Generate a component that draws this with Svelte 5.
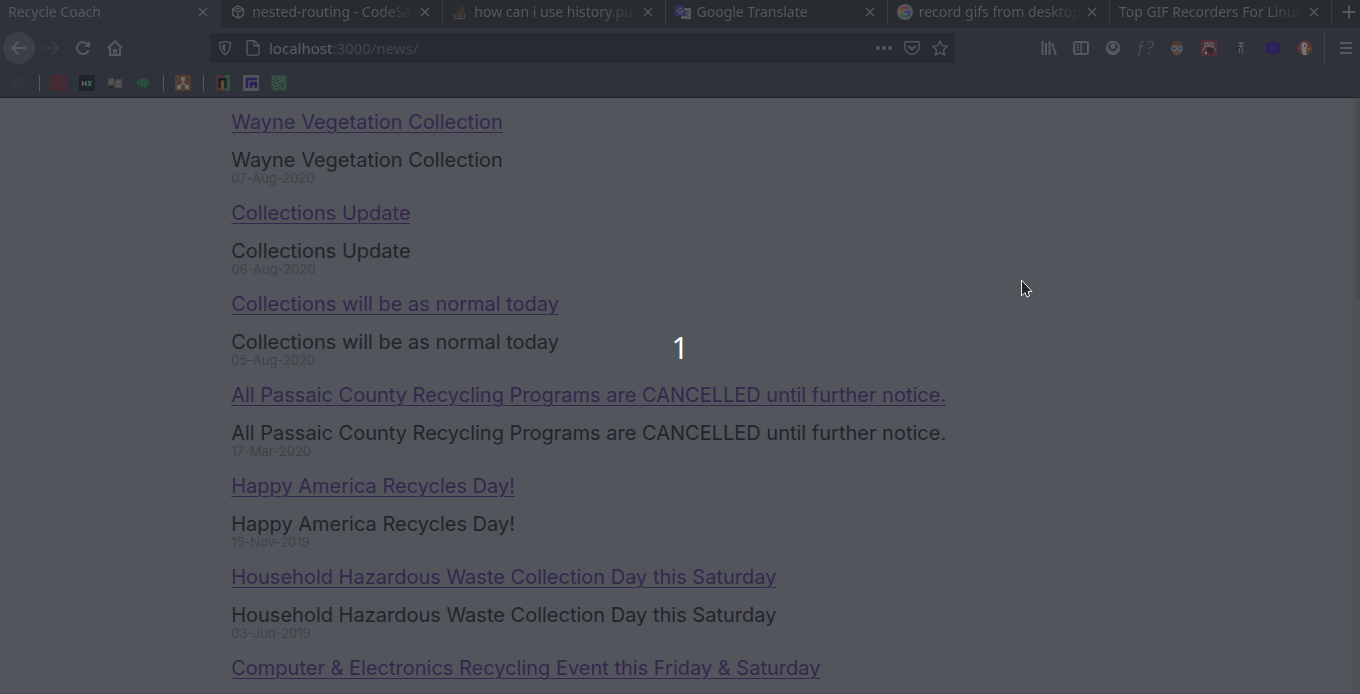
<script lang="ts">
  const tabs = [
    { title: 'Recycle Coach', icon: '' },
    { title: 'nested-routing - CodeSa', icon: 'sandbox' },
    { title: 'how can i use history.pu', icon: 'stack' },
    { title: 'Google Translate', icon: 'translate' },
    { title: 'record gifs from desktop', icon: 'google' },
    { title: 'Top GIF Recorders For Linux', icon: '' },
  ];

  const bookmarks = ['dots', '|', 'red', 'hx', 'book', 'oval', '|', 'share', '|', 'gate', 'g', 'maze'];

  const tools = ['library', 'sidebar', 'account', 'fx', 'face', 'gift', 'bug', 'hex', 'duck'];

  const news = [
    { title: 'Wayne Vegetation Collection', date: '07-Aug-2020' },
    { title: 'Collections Update', date: '06-Aug-2020' },
    { title: 'Collections will be as normal today', date: '05-Aug-2020' },
    {
      title: 'All Passaic County Recycling Programs are CANCELLED until further notice.',
      date: '17-Mar-2020',
    },
    { title: 'Happy America Recycles Day!', date: '15-Nov-2019' },
    { title: 'Household Hazardous Waste Collection Day this Saturday', date: '03-Jun-2019' },
    { title: 'Computer & Electronics Recycling Event this Friday & Saturday', date: '' },
  ];

  let active = $state(0);
  let address = $state('localhost:3000/news/');
  let count = $state(1);
</script>

{#snippet icon(name: string)}
  <svg class="icon" viewBox="0 0 16 16" width="16" height="16" aria-hidden="true">
    {#if name === 'sandbox'}
      <path class="line" d="M8 1.8 13.4 4.9v6.2L8 14.2 2.6 11.1V4.9zM2.6 4.9 8 8l5.4-3.1M8 8v6.2M5.2 3.4 8 5l2.8-1.6" />
    {:else if name === 'stack'}
      <path d="M2.5 10v4.5h10V10" fill="none" stroke="#484b50" stroke-width="1.2" />
      <path d="M4.5 12.5h6M4.6 10.3l6 .7M5.2 7.6l5.6 1.8M6.6 4.8l5 3.2M9 2.2l3.2 4.6" fill="none" stroke="#4e3a2f" stroke-width="1.4" />
    {:else if name === 'translate'}
      <rect x="6" y="4" width="10" height="11" rx="1" fill="#55585f" />
      <path d="M8.5 7.5h6M11.5 6v1.5M13.3 7.5c-.5 2-2 3.5-3.5 4.5M9.8 9c.7 1.5 2 2.5 3.7 3.3" stroke="#34384a" fill="none" />
      <path d="M1 1h7l3.5 11H1a1 1 0 0 1-1-1V2a1 1 0 0 1 1-1z" fill="#30345c" />
      <path d="M7.5 5.2A2.5 2.5 0 1 0 8 7H5.6" stroke="#62656d" fill="none" />
    {:else if name === 'google'}
      <circle cx="8" cy="8" r="8" fill="#53565d" />
      <g fill="none" stroke-width="2">
        <path d="M11.4 4.8A4.7 4.7 0 0 0 3.9 5.8" stroke="#713636" />
        <path d="M3.9 5.8a4.7 4.7 0 0 0 0 4.4" stroke="#705f31" />
        <path d="M3.9 10.2a4.7 4.7 0 0 0 7 1.4" stroke="#2c5b40" />
        <path d="M8 8h4.7c0 1.5-.6 2.8-1.8 3.6" stroke="#343e70" />
      </g>
    {:else if name === 'close'}
      <path class="line" d="m3.8 3.8 8.4 8.4m0-8.4-8.4 8.4" />
    {:else if name === 'plus'}
      <path class="line heavy" d="M8 1.5v13M1.5 8h13" />
    {:else if name === 'back'}
      <path class="line heavy" d="M15 8H1.5M7.5 1.8 1.3 8l6.2 6.2" />
    {:else if name === 'forward'}
      <path class="line dim" d="M1 8h13.5M8.5 1.8 14.7 8l-6.2 6.2" />
    {:else if name === 'reload'}
      <path class="line heavy" d="M13.6 10.2A6 6 0 1 1 12.6 4.2" />
      <path class="solid" d="M15 1v6H9z" />
    {:else if name === 'home'}
      <path class="line heavy" d="M.8 8.2 8 1.2l7.2 7M3 7.5V15h10V7.5" />
      <path class="solid" d="M6 9h4v6H8.8v-3H7.2v3H6z" />
    {:else if name === 'shield'}
      <path class="line" d="M8 1.3c1.8 1 3.6 1.3 5.5 1.3 0 5.6-1 9.7-5.5 12-4.500-2.300-5.500-6.400-5.500-12C4.400 2.600 6.200 2.300 8 1.300z" />
      <path class="solid" d="M8 4v8C6 10.500 5.300 8.500 5.200 4.800 6.200 4.700 7.200 4.400 8 4z" />
    {:else if name === 'page'}
      <path class="line" d="M3 .8h6.500L14 5.200v8.300a1.600 1.600 0 0 1-1.600 1.600H3.600A1.600 1.600 0 0 1 2 13.500V1.800a1 1 0 0 1 1-1zM9 1v4.700h4.700" />
    {:else if name === 'more'}
      <circle class="solid" cx="2" cy="8" r="2" /><circle class="solid" cx="8" cy="8" r="2" /><circle class="solid" cx="14" cy="8" r="2" />
    {:else if name === 'pocket'}
      <path class="line" d="M2 1.800h12a1.200 1.200 0 0 1 1.200 1.200v4a7.200 7.200 0 0 1-14.400 0V3A1.200 1.200 0 0 1 2 1.800z" />
      <path class="line heavy" d="M4.500 6 8 9.300 11.500 6" />
    {:else if name === 'star'}
      <path class="line" d="m8 .9 2.200 4.700 5 .7-3.700 3.600.9 5.100L8 12.500 3.600 15l.9-5.100L.8 6.300l5-.7z" />
    {:else if name === 'library'}
      <path class="line heavy" d="M1.500 1v14M5 3v12M8.500 1v14M10.800 3 15 15" />
    {:else if name === 'sidebar'}
      <rect class="line heavy" x="1" y="2" width="14" height="12" rx="2" />
      <path class="line" d="M8 2v12M3.500 5h2.500M3.500 7.500h2.500M3.500 10h2.500" />
    {:else if name === 'account'}
      <circle class="line heavy" cx="8" cy="8" r="6.200" />
      <path class="solid" d="M1.500 8.500h3c.6 2 2 3 3.500 3s2.900-1 3.500-3h3c0 3.800-2.700 6.500-6.500 6.500s-6.500-2.700-6.500-6.500z" />
      <circle class="solid" cx="8" cy="6.300" r="2.700" />
    {:else if name === 'face'}
      <path d="M3 7.500C2 2 6 1.500 8 2.500c3-1.500 6 1 5 5V11c-1 3-3 4.500-5 4.500S4 14 3 11z" fill="#574538" />
      <path d="M2.500 6C3 1 6 .6 8 1.500c3-1.300 5.500.5 5.500 4.500-3-1.500-8-1.500-11 0z" fill="#4b3a32" />
      <g fill="#38475a" stroke="#606970"><circle cx="5" cy="8.500" r="2.400" /><circle cx="11" cy="8.500" r="2.400" /></g>
    {:else if name === 'gift'}
      <rect width="16" height="16" fill="#522e38" />
      <path d="M4 6V3h3v3m2 0V3h3v3M2 11c0-3 2-5 6-5s6 2 6 5" fill="none" stroke="#625c62" stroke-width="1.400" />
      <path d="M6 8h7v3l-2 3H8l1-2H6z" fill="#292a30" /><path d="M4 11v3h2v-2" fill="#777379" />
    {:else if name === 'bug'}
      <path d="M5 2h6v10H5zM2 4h3M2 9h3m6-5h3m-3 5h3" fill="#292c31" stroke="#292c31" />
      <path d="M5 3h6M8 2v6M5 6h6M6.500 8v5M9.500 8v5" stroke="#55595d" fill="none" stroke-width="1.500" />
    {:else if name === 'hex'}
      <path d="m8 .5 7 4v7l-7 4-7-4v-7z" fill="#2a2154" /><path d="m8 3 4.500 2.500v5L8 13l-4.500-2.500v-5z" fill="#322161" />
    {:else if name === 'duck'}
      <circle cx="8" cy="8" r="7.500" fill="#5a3735" />
      <path d="M4.500 3c3-1.500 6 0 6 3.500L9 9l1 6H6L4.500 9z" fill="#777478" /><circle cx="8" cy="6" r="1" fill="#303842" />
      <path d="M9 8h4l-1 2H9z" fill="#69562e" /><path d="m9 12 3-1v3H9z" fill="#315743" />
    {:else if name === 'menu'}
      <path class="line heavy" d="M2 3h12M2 8h12M2 13h12" />
    {:else if name === 'dots'}
      <g fill="none" stroke="#2b4051" stroke-dasharray="1 1"><path d="M3 3h10v9H3zM1 7h3M11 4h4M5 5v7M11 2v12M6 10h7" /></g>
    {:else if name === 'red'}
      <rect width="16" height="16" fill="#402b34" />
      <path d="M1 1h14v14H1zM4 4h4l3 3 3-2M3 8h5l3 4h3M3 12h4" stroke="#5c2b36" fill="none" stroke-dasharray="2 1" />
    {:else if name === 'hx'}
      <rect width="16" height="16" fill="#202329" />
      <path d="M3.500 6v5M7 6v5M3.500 8.500H7" stroke="#62666a" fill="none" stroke-width="1.400" />
      <path d="m9 6 3.500 5m0-5L9 11" stroke="#326850" fill="none" stroke-width="1.500" />
    {:else if name === 'book'}
      <path d="M1 3h6v8H1zM7 4h8v9H7z" fill="#494949" /><path d="M3 5v5M5 4v4M8 7h3M12 5v4M9 11h4" stroke="#62605f" fill="none" /><path d="M2 11h5v2H2zM8 3v4" fill="#282a2e" stroke="#282a2e" />
    {:else if name === 'oval'}
      <ellipse cx="8" cy="8" rx="7.500" ry="5" fill="#284034" />
      <path d="M2 7h12M3 9h11M5 5h7M6 11h6" stroke="#286f49" stroke-dasharray="2 1" />
    {:else if name === 'share'}
      <rect width="16" height="16" fill="#4f3c32" /><path d="M8 4v4l-4 4m4-4 4 4" stroke="#686664" fill="none" stroke-width="1.500" />
      <path d="M6 2h4v4H6zM2 10h4v4H2zM10 10h4v4h-4z" fill="#6e6c6b" />
    {:else if name === 'gate'}
      <rect x="1" width="14" height="16" fill="#4a343b" /><rect x="10" width="5" height="16" fill="#31523f" />
      <path d="M4.500 13V4h6v9" stroke="#191b1e" stroke-width="2" fill="none" /><path d="M6 6h3v9H6z" fill="#5c4a3b" />
    {:else if name === 'g'}
      <rect width="16" height="16" fill="#52545e" /><path d="M14 4H4v9M14 8H8v5M8 9h5v4" stroke="#2b2157" stroke-width="2.500" fill="none" />
    {:else if name === 'maze'}
      <rect width="16" height="16" fill="#30403b" />
      <path d="M2 2h10v4h2v8H4v-3H2zM5 4v5l6 4M11 4 5 12M13 2v2M2 13h1M8 3v4h4" stroke="#45695a" fill="none" stroke-dasharray="2 1" />
    {/if}
  </svg>
{/snippet}

<div class="browser">
  <header>
    <nav class="tabs" aria-label="Open tabs">
      {#each tabs as tab, i}
        <div class="tab" class:active={i === active}>
          <button class="tab-name" onclick={() => (active = i)}>
            {#if tab.icon}{@render icon(tab.icon)}{/if}
            <span>{tab.title}</span>
          </button>
          <button class="close" aria-label="Close tab">{@render icon('close')}</button>
        </div>
      {/each}
      <button class="new-tab" aria-label="New tab">{@render icon('plus')}</button>
    </nav>

    <div class="toolbar">
      <div class="group">
        <button class="tool back" aria-label="Back">{@render icon('back')}</button>
        <button class="tool" aria-label="Forward">{@render icon('forward')}</button>
        <button class="tool" aria-label="Reload">{@render icon('reload')}</button>
        <button class="tool" aria-label="Home">{@render icon('home')}</button>
      </div>
      <div class="address">
        {@render icon('shield')}
        {@render icon('page')}
        <label class="field">
          <span class="shown"><b>{address.split(':')[0]}</b>:{address.split(':')[1]}</span>
          <input aria-label="Address" bind:value={address} />
        </label>
        <button aria-label="Page actions">{@render icon('more')}</button>
        <button aria-label="Save to Pocket">{@render icon('pocket')}</button>
        <button aria-label="Bookmark this page">{@render icon('star')}</button>
      </div>
      <div class="group">
        {#each tools as tool}
          <button class="tool" aria-label={tool}>
            {#if tool === 'fx'}<i>ƒ?</i>{:else}{@render icon(tool)}{/if}
          </button>
        {/each}
      </div>
      <button class="menu" aria-label="Menu">{@render icon('menu')}</button>
    </div>

    <div class="bookmarks">
      {#each bookmarks as mark}
        {#if mark === '|'}
          <span class="divider"></span>
        {:else}
          <button aria-label={mark}>{@render icon(mark)}</button>
        {/if}
      {/each}
    </div>
  </header>

  <main>
    <ul class="news">
      {#each news as item}
        <li>
          <a href="#news">{item.title}</a>
          {#if item.date}
            <h3>{item.title}</h3>
            <time>{item.date}</time>
          {/if}
        </li>
      {/each}
    </ul>
    <div class="scrollbar"><div class="thumb"></div></div>
  </main>

  <div class="countdown">{count}</div>
  <svg class="pointer" viewBox="0 0 13 20" width="13" height="20" aria-hidden="true">
    <path d="M1.500 1v16l3.500-3.500L7 18l2.500-1L8 12.500h4z" fill="#222427" stroke="#eee" stroke-linejoin="round" />
  </svg>
</div>

<style>
  :global(body) {
    margin: 0;
    background: #52555c;
  }

  .browser {
    position: relative;
    display: flex;
    flex-direction: column;
    height: 100vh;
    overflow: hidden;
    font-family: 'Noto Sans', sans-serif;
    color: #55585e;
  }

  button {
    display: flex;
    align-items: center;
    justify-content: center;
    margin: 0;
    padding: 0;
    border: 0;
    background: none;
    color: inherit;
    font: inherit;
  }

  .icon {
    display: block;
    flex: none;
  }

  .line {
    fill: none;
    stroke: currentColor;
    stroke-width: 1.4;
  }

  .heavy {
    stroke-width: 2;
  }

  .dim {
    opacity: 0.4;
  }

  .solid {
    fill: currentColor;
  }

  header {
    flex: none;
    background: #2f323a;
    border-bottom: 1px solid #222429;
  }

  .tabs {
    display: flex;
    height: 28px;
    background: #282b30;
    font-size: 14px;
    line-height: 24px;
  }

  .tab {
    display: flex;
    flex: 1;
    align-items: flex-start;
    min-width: 0;
    padding: 0 10px 0 9px;
    background: linear-gradient(#3b3e43, #3b3e43) right top / 1px 24px no-repeat;
    box-sizing: border-box;
  }

  .tab.active {
    padding-left: 8px;
    background: #2f323a;
  }

  .tab-name {
    flex: 1;
    justify-content: flex-start;
    gap: 6px;
    min-width: 0;
    height: 24px;
  }

  .tab-name span {
    flex: 1;
    overflow: hidden;
    text-align: left;
    white-space: nowrap;
    mask-image: linear-gradient(to left, transparent, #000 36px);
  }

  .close,
  .new-tab {
    height: 24px;
  }

  .new-tab {
    width: 28px;
    padding-left: 6px;
  }

  .toolbar {
    display: flex;
    align-items: center;
    height: 40px;
    padding-left: 3px;
  }

  .group {
    display: flex;
  }

  .tool {
    width: 32px;
    height: 32px;
  }

  .tool i {
    color: #494c52;
    font-family: 'Liberation Serif', serif;
    font-size: 18px;
  }

  .back {
    border-radius: 50%;
    background: #3c3f46;
  }

  .address {
    display: flex;
    flex: 1;
    align-items: center;
    gap: 12px;
    height: 30px;
    margin: 0 78px 0 79px;
    padding: 0 7px;
    border-radius: 3px;
    background: #272a32;
    box-sizing: border-box;
  }

  .field {
    display: grid;
    flex: 1;
    align-items: center;
    margin-left: -4px;
    font-size: 15px;
    line-height: 24px;
  }

  .field > * {
    grid-area: 1 / 1;
  }

  .field input {
    width: 100%;
    padding: 0;
    border: 0;
    outline: 0;
    background: none;
    color: transparent;
    font: inherit;
  }

  .shown {
    color: #43464b;
  }

  .shown b {
    color: #5c5f65;
    font-weight: 400;
  }

  .menu {
    width: 36px;
    height: 32px;
    margin-left: 3px;
    padding-left: 6px;
    border-left: 1px solid #3d4046;
  }

  .bookmarks {
    display: flex;
    align-items: center;
    height: 29px;
    padding-left: 5px;
  }

  .bookmarks button {
    width: 28px;
  }

  .divider {
    width: 1px;
    height: 16px;
    margin: 0 5px 0 6px;
    background: #55585e;
  }

  main {
    display: flex;
    flex: 1;
    min-height: 0;
    border-bottom: 1px solid #4a4d53;
  }

  .news {
    flex: 1;
    margin: 0;
    padding: 12px 0 0 17%;
    list-style: none;
    font-family: Inter, sans-serif;
    font-size: 20px;
    line-height: 24px;
  }

  .news li {
    height: 91px;
  }

  .news a {
    display: table;
    color: #35284d;
    text-decoration-thickness: 1px;
    text-underline-offset: 3px;
  }

  .news h3 {
    margin: 14px 0 0;
    color: #232529;
    font: inherit;
  }

  .news time {
    display: block;
    color: #404348;
    font-size: 13px;
    line-height: 12px;
  }

  .scrollbar {
    width: 7px;
    background: #4e5256;
  }

  .thumb {
    width: 4px;
    height: 33%;
    margin: 4px 0 0 auto;
    background: #484c51;
  }

  .countdown {
    position: absolute;
    inset: 0;
    display: grid;
    place-items: center;
    color: #fff;
    font-size: 30px;
    pointer-events: none;
  }

  .pointer {
    position: absolute;
    top: 279px;
    left: 1020px;
  }
</style>
